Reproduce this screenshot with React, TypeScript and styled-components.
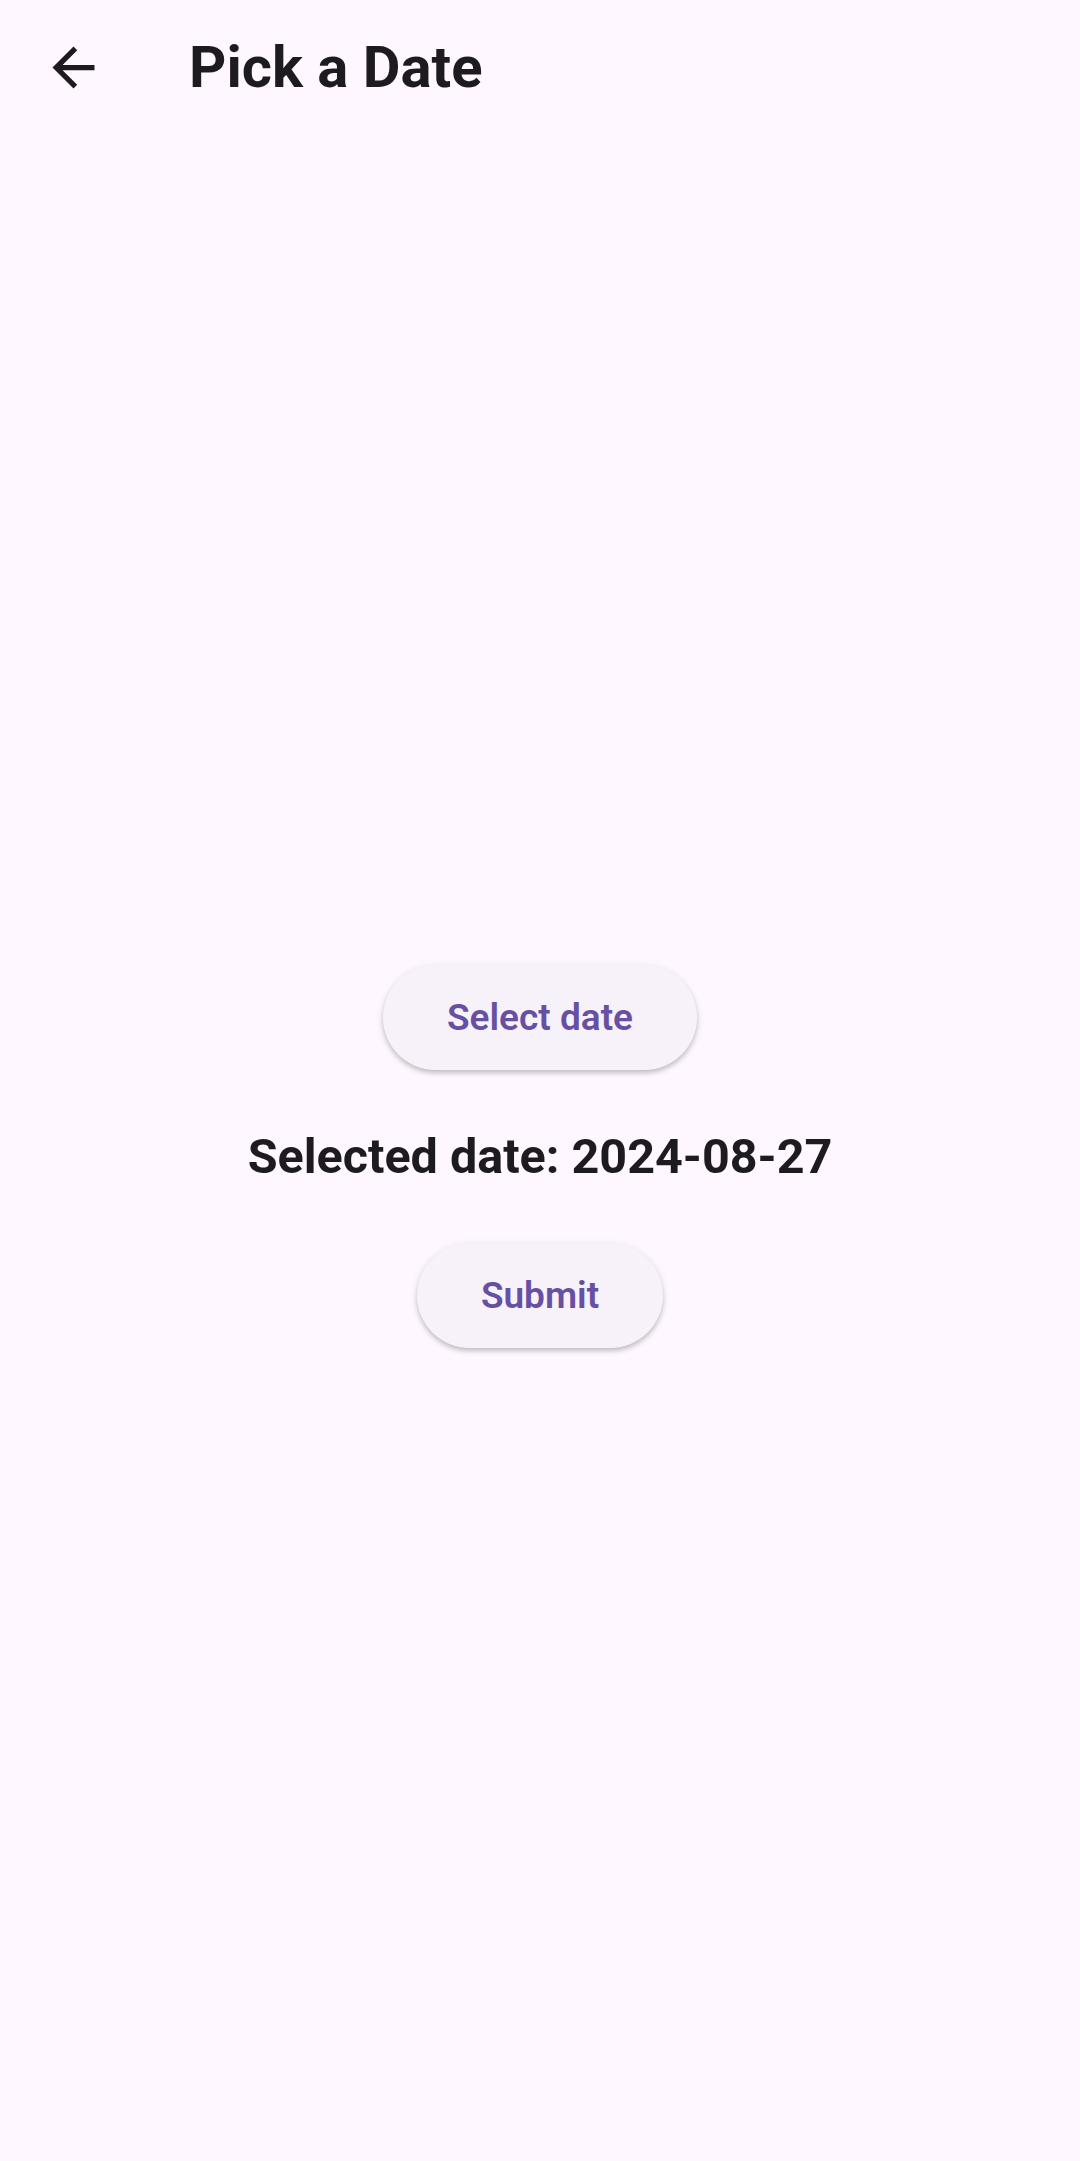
import styled, { createGlobalStyle } from "styled-components";

const GlobalStyle = createGlobalStyle`
  html, body {
    margin: 0;
    padding: 0;
    background: #fef7ff;
    font-family: Roboto, "Noto Sans", sans-serif;
  }
`;

export default function App() {
  return (
    <>
      <GlobalStyle />
      <Page>
        <AppBar>
          <BackButton aria-label="Back">
            <svg width="63" height="63" viewBox="0 0 24 24">
              <path
                d="M20 11H7.83l5.59-5.59L12 4l-8 8 8 8 1.41-1.41L7.83 13H20v-2z"
                fill="#1d1b20"
              />
            </svg>
          </BackButton>
          <Title>Pick a Date</Title>
        </AppBar>
        <Body>
          <PillButton>Select date</PillButton>
          <SelectedDate>Selected date: 2024-08-27</SelectedDate>
          <PillButton>Submit</PillButton>
        </Body>
      </Page>
    </>
  );
}

const Page = styled.div`
  min-height: 100vh;
  display: flex;
  flex-direction: column;
  background: #fef7ff;
`;

const AppBar = styled.header`
  height: 134px;
  display: flex;
  align-items: center;
  padding-left: 42px;
  gap: 84px;
`;

const BackButton = styled.button`
  width: 63px;
  height: 63px;
  padding: 0;
  border: none;
  background: none;
  display: flex;
  align-items: center;
  justify-content: center;
  cursor: pointer;
`;

const Title = styled.h1`
  margin: 0;
  font-size: 58px;
  font-weight: 700;
  color: #1d1b20;
`;

const Body = styled.main`
  flex: 1;
  display: flex;
  flex-direction: column;
  align-items: center;
  justify-content: center;
  gap: 58px;
  padding-top: 18px;
`;

const PillButton = styled.button`
  height: 105px;
  padding: 0 64px;
  border: none;
  border-radius: 53px;
  background: #f7f2fa;
  color: #6750a4;
  font-family: Roboto, "Noto Sans", sans-serif;
  font-size: 37px;
  font-weight: 600;
  box-shadow: 0 3px 4px rgba(0, 0, 0, 0.18), 0 2px 7px 2px rgba(0, 0, 0, 0.06);
  cursor: pointer;
`;

const SelectedDate = styled.p`
  margin: 0;
  font-size: 48.5px;
  font-weight: 700;
  color: #1d1b20;
`;
